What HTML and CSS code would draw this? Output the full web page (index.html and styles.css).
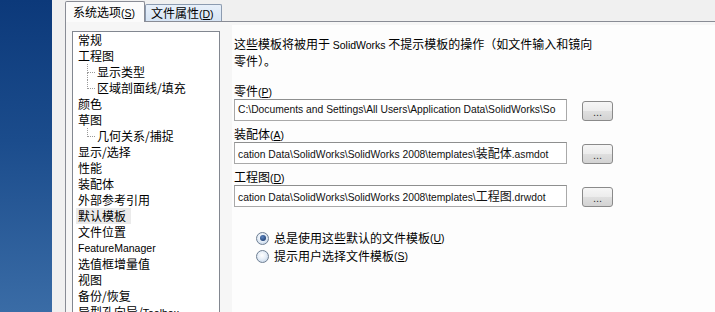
FILE: index.html
```html
<!DOCTYPE html>
<html lang="zh-CN">
<head>
<meta charset="utf-8">
<title>系统选项 - 默认模板</title>
<link rel="stylesheet" href="styles.css">
</head>
<body>
<div class="desk"></div>
<div class="dialog">
  <div class="tabs">
    <div class="tab active">系统选项<span class="en">(<u>S</u>)</span></div>
    <div class="tab">文件属性<span class="en">(<u>D</u>)</span></div>
  </div>
  <div class="panel">
    <ul class="tree">
      <li>常规</li>
      <li>工程图</li>
      <li class="sub cont">显示类型</li>
      <li class="sub">区域剖面线/填充</li>
      <li>颜色</li>
      <li>草图</li>
      <li class="sub">几何关系/捕捉</li>
      <li>显示/选择</li>
      <li>性能</li>
      <li>装配体</li>
      <li>外部参考引用</li>
      <li><span class="sel">默认模板</span></li>
      <li>文件位置</li>
      <li class="en">FeatureManager</li>
      <li>选值框增量值</li>
      <li>视图</li>
      <li>备份/恢复</li>
      <li>异型孔向导/<span class="en">Toolbox</span></li>
    </ul>
    <div class="content">
      <p class="desc">这些模板将被用于 <span class="en">SolidWorks</span> 不提示模板的操作（如文件输入和镜向<br>零件）。</p>
      <div class="group">
        <div class="label">零件<span class="en">(<u>P</u>)</span></div>
        <div class="row">
          <div class="field">C:\Documents and Settings\All Users\Application Data\SolidWorks\So</div>
          <div class="btn">...</div>
        </div>
      </div>
      <div class="group">
        <div class="label">装配体<span class="en">(<u>A</u>)</span></div>
        <div class="row">
          <div class="field">cation Data\SolidWorks\SolidWorks 2008\templates\<span class="cjk">装配体</span>.asmdot</div>
          <div class="btn">...</div>
        </div>
      </div>
      <div class="group">
        <div class="label">工程图<span class="en">(<u>D</u>)</span></div>
        <div class="row">
          <div class="field">cation Data\SolidWorks\SolidWorks 2008\templates\<span class="cjk">工程图</span>.drwdot</div>
          <div class="btn">...</div>
        </div>
      </div>
      <div class="radios">
        <div class="opt"><span class="radio on"></span>总是使用这些默认的文件模板<span class="en">(<u>U</u>)</span></div>
        <div class="opt"><span class="radio"></span>提示用户选择文件模板<span class="en">(<u>S</u>)</span></div>
      </div>
    </div>
  </div>
</div>
</body>
</html>
```

FILE: styles.css
```css
* { box-sizing: border-box; margin: 0; padding: 0; }
html, body { width: 715px; height: 312px; overflow: hidden; }
body {
  display: flex;
  font-family: "Noto Sans CJK SC", sans-serif;
  font-size: 12px;
  color: #000;
  background: #f0f0f0;
}
.en { font-family: "Liberation Sans", "Noto Sans CJK SC", sans-serif; font-size: 10.5px; }
.cjk { font-family: "Noto Sans CJK SC", sans-serif; font-size: 12px; }
u { text-decoration: underline; text-underline-offset: 1px; }

.desk {
  width: 52px;
  flex: none;
  background: linear-gradient(180deg, #0c397a 0%, #1b4c8c 45%, #3a6ca6 100%);
}
.dialog {
  flex: 1;
  display: flex;
  flex-direction: column;
  padding-left: 13px;
  background: #f0f0f0;
  min-width: 0;
  height: 312px;
  overflow: hidden;
}
.tabs {
  display: flex;
  align-items: flex-end;
  height: 21px;
  flex: none;
}
.tab {
  height: 17px;
  line-height: 15px;
  padding: 0 5px;
  width: 77px;
  border: 1px solid #8c9bb0;
  border-bottom: none;
  border-radius: 2px 2px 0 0;
  background: linear-gradient(180deg, #e8f0fa 0%, #d6e4f4 100%);
  white-space: nowrap;
}
.tab.active {
  position: relative;
  z-index: 1;
  width: 80px;
  height: 21px;
  line-height: 20px;
  margin-bottom: -1px;
  padding: 0 7px;
  background: #fbfbfb;
  border-color: #898c95;
}
.panel {
  flex: 1;
  display: flex;
  align-items: flex-start;
  border-top: 1px solid #898c95;
  border-left: 1px solid #898c95;
  background: #f6f6f6;
  padding: 3px 0 0 6px;
  min-height: 0;
  overflow: hidden;
}
.tree {
  list-style: none;
  width: 148px;
  flex: none;
  height: 281px;
  margin-top: 6px;
  border: 1px solid #828790;
  border-bottom: none;
  background: #fff;
  overflow: hidden;
}
.tree li {
  height: 16px;
  line-height: 16px;
  padding-left: 5px;
  white-space: nowrap;
  position: relative;
}
.tree li.sub { padding-left: 24px; }
.tree li.sub::before {
  content: "";
  position: absolute;
  left: 14px;
  top: 0;
  width: 7px;
  height: 8px;
  border-left: 1px dotted #9a9a9a;
  border-bottom: 1px dotted #9a9a9a;
}
.tree li.cont::after {
  content: "";
  position: absolute;
  left: 14px;
  top: 8px;
  height: 8px;
  border-left: 1px dotted #9a9a9a;
}
.sel {
  display: inline-block;
  background: #ebebeb;
  padding: 0 5px 0 2px;
  margin-left: -2px;
}

.content {
  flex: 1;
  margin-left: 12px;
  padding: 11px 0 0 2px;
  background: #fdfdfd;
  height: 287px;
}
.desc { line-height: 15px; }
.group { margin-top: 5px; }
.group:first-of-type { margin-top: 15px; }
.label { line-height: 15px; height: 15px; }
.row {
  display: flex;
  align-items: center;
  margin-top: 1px;
}
.field {
  width: 333px;
  height: 22px;
  flex: none;
  border: 1px solid #a9a9a9;
  border-top-color: #8e8f8f;
  background: #fff;
  padding: 0 3px;
  line-height: 20px;
  overflow: hidden;
  white-space: nowrap;
  text-overflow: clip;
  font-family: "Liberation Sans", "Noto Sans CJK SC", sans-serif;
  font-size: 10.3px;
  color: #111;
}
.btn {
  width: 31px;
  height: 20px;
  flex: none;
  margin-left: 15px;
  margin-top: 2px;
  border: 1px solid #8a8a8a;
  border-radius: 3px;
  background: linear-gradient(180deg, #f6f6f6 0%, #ececec 50%, #dfdfdf 51%, #d3d3d3 100%);
  font-family: "Liberation Sans", sans-serif;
  font-size: 11px;
  line-height: 20px;
  text-align: center;
  color: #333;
}
.radios { margin-top: 22px; padding-left: 22px; }
.opt {
  display: flex;
  align-items: center;
  height: 18px;
  line-height: 18px;
  white-space: nowrap;
}
.radio {
  width: 13px;
  height: 13px;
  flex: none;
  margin-right: 5px;
  border-radius: 50%;
  border: 1px solid #6f7f93;
  background: radial-gradient(circle at 45% 40%, #ffffff 0%, #e6eef7 45%, #b9cce2 100%);
  position: relative;
}
.radio.on::after {
  content: "";
  position: absolute;
  left: 2.5px;
  top: 2.5px;
  width: 6px;
  height: 6px;
  border-radius: 50%;
  background: radial-gradient(circle at 40% 35%, #5d86c0 0%, #1f3f73 80%);
}
```
